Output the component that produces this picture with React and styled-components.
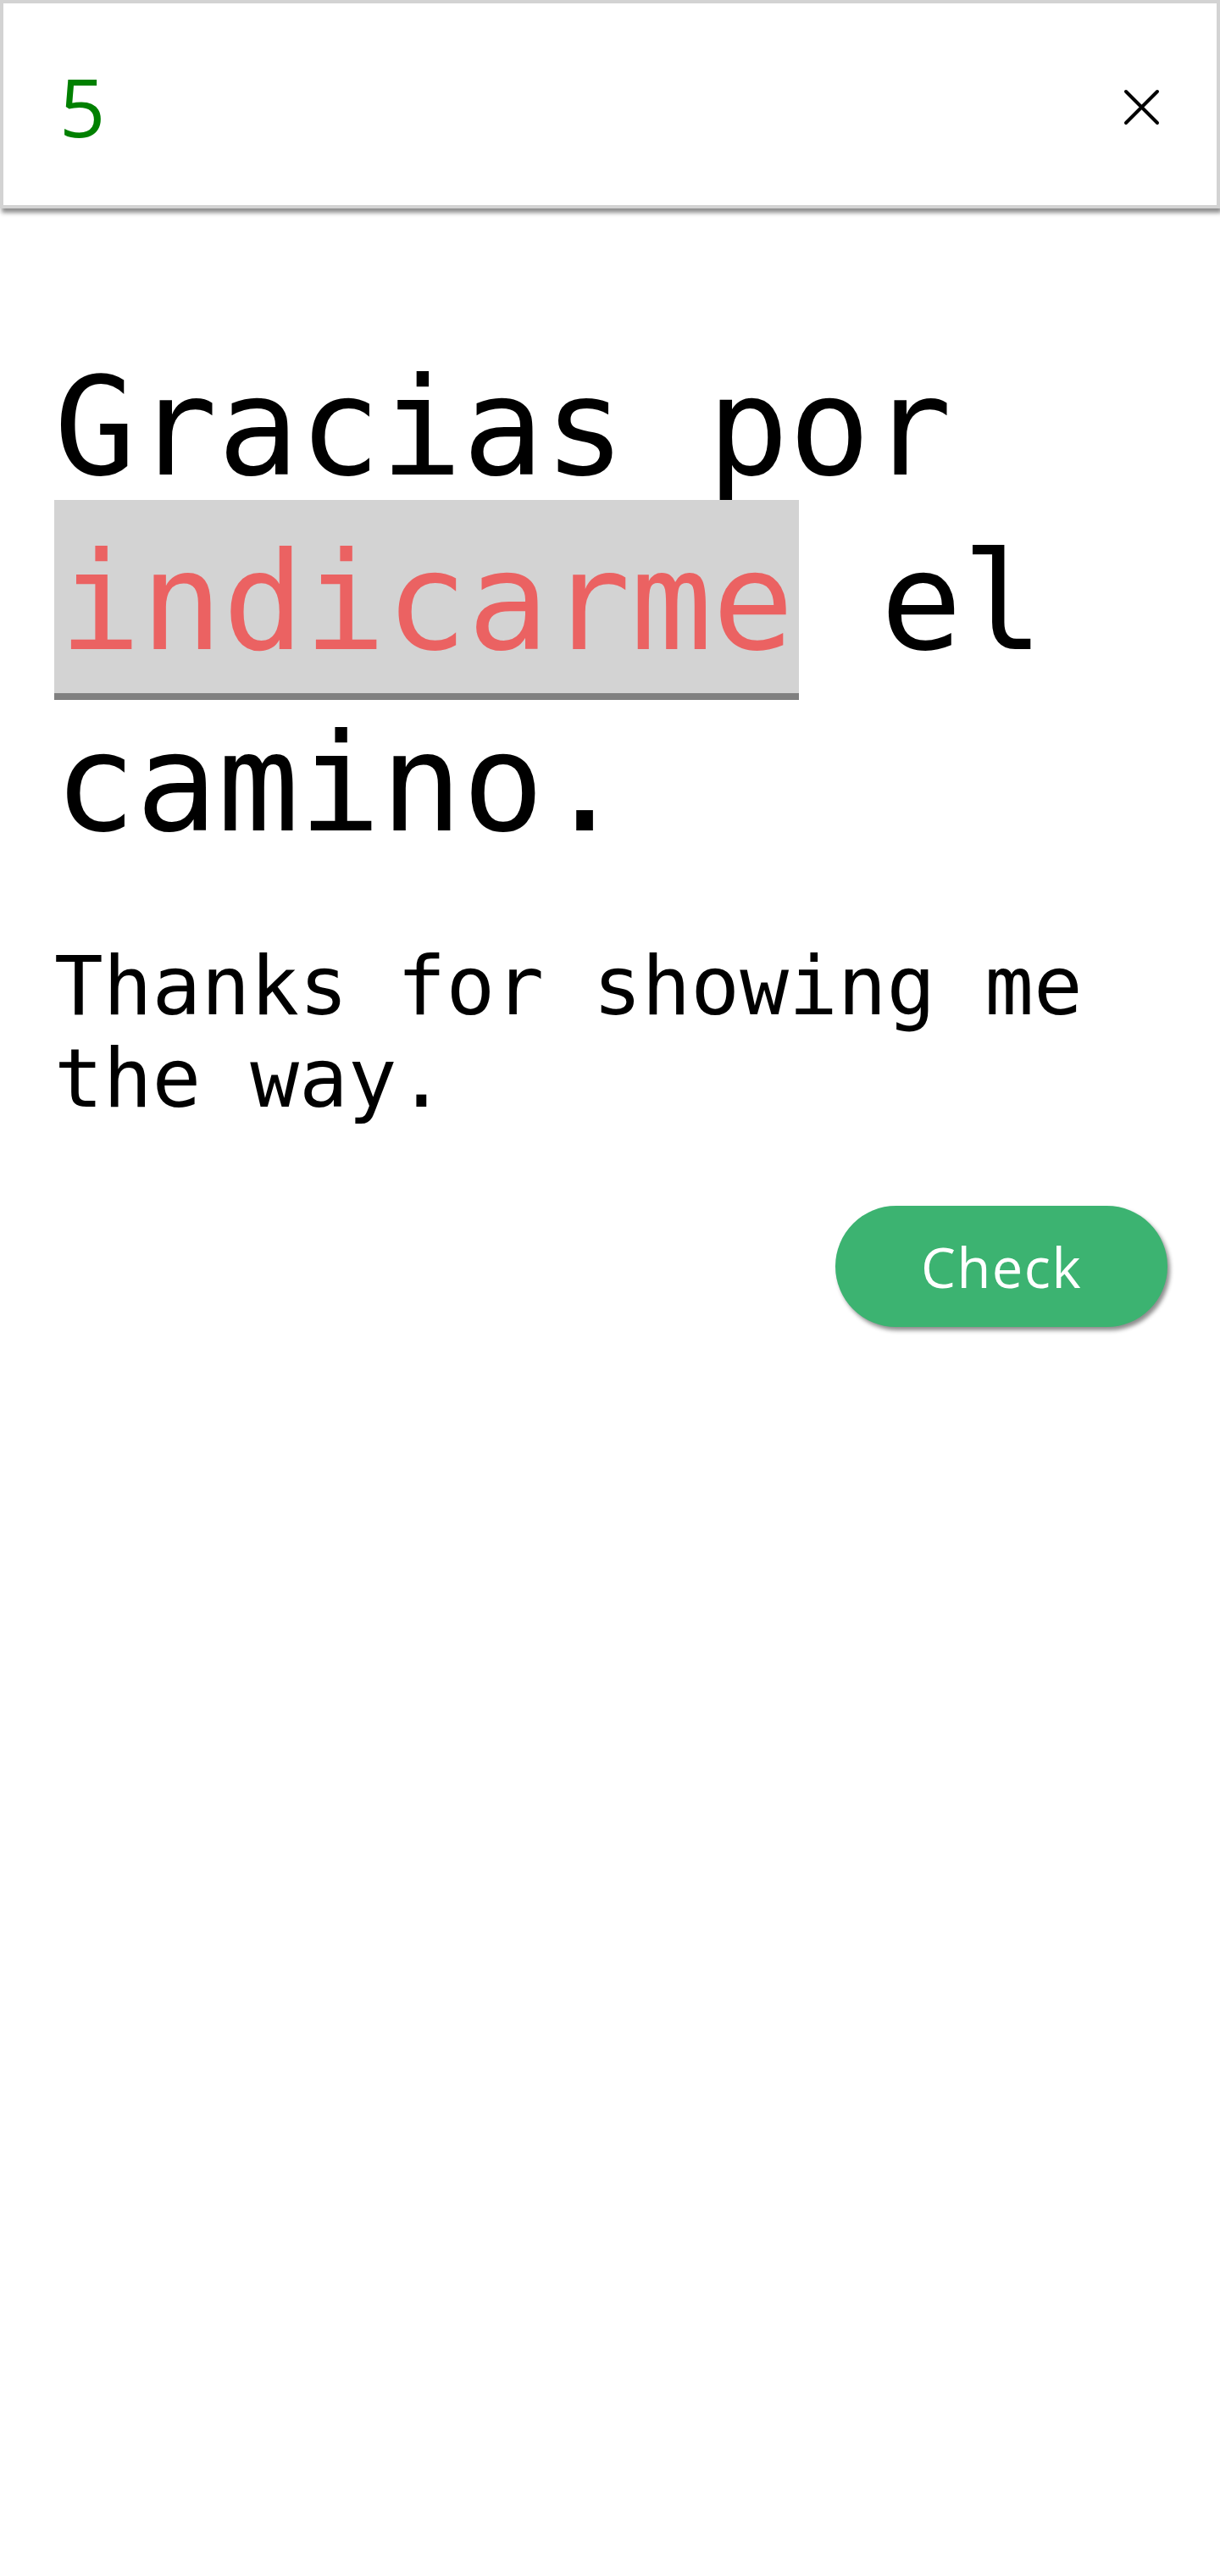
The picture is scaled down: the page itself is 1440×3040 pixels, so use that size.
import React from "react";
import styled, { createGlobalStyle } from "styled-components";

const GlobalStyle = createGlobalStyle`
  html, body {
    margin: 0;
    padding: 0;
    background: #ffffff;
  }
  body {
    width: 1440px;
    min-height: 3040px;
    font-family: "DejaVu Sans Mono", "Liberation Mono", monospace;
    color: #000000;
  }
  * { box-sizing: border-box; }
`;

const TopBar = styled.header`
  display: flex;
  align-items: center;
  justify-content: space-between;
  height: 246px;
  padding: 0 67px 0 66px;
  border: 4px solid #d3d3d3;
  box-shadow: 2px 5px 5px rgba(0, 0, 0, 0.45);
  background: #ffffff;
`;

const Counter = styled.span`
  font-family: "Open Sans", "Noto Sans", sans-serif;
  font-size: 95px;
  line-height: 1;
  color: #008000;
  margin-top: 4px;
`;

const CloseButton = styled.button`
  display: flex;
  align-items: center;
  justify-content: center;
  width: 43px;
  height: 43px;
  padding: 0;
  margin-top: 7px;
  border: none;
  background: transparent;
  cursor: pointer;
`;

const Main = styled.main`
  padding: 156px 64px 0;
`;

const Sentence = styled.h1`
  margin: 0;
  font-family: "DejaVu Sans Mono", "Liberation Mono", monospace;
  font-weight: 400;
  font-size: 160px;
  line-height: 206px;
  color: #000000;
`;

const Blank = styled.span`
  display: inline-block;
  padding: 28px 6px 14px;
  margin: -18px 0 -4px;
  line-height: 186px;
  background: #d3d3d3;
  border-bottom: 8px solid #808080;
  color: #eb6262;
`;

const Translation = styled.p`
  margin: 82px 0 0;
  font-family: "DejaVu Sans Mono", "Liberation Mono", monospace;
  font-size: 96px;
  line-height: 109px;
  color: #000000;
`;

const Actions = styled.div`
  display: flex;
  justify-content: flex-end;
  margin-top: 95px;
`;

const CheckButton = styled.button`
  display: flex;
  align-items: center;
  justify-content: center;
  width: 392px;
  height: 143px;
  margin-right: -2px;
  border: none;
  border-radius: 72px;
  background: #3cb371;
  color: #ffffff;
  font-family: "Open Sans", "Noto Sans", sans-serif;
  font-size: 65px;
  letter-spacing: 1.5px;
  box-shadow: 3px 4px 5px rgba(0, 0, 0, 0.45);
  cursor: pointer;
`;

function CloseIcon() {
  return (
    <svg width="43" height="43" viewBox="0 0 43 43" aria-hidden="true">
      <path
        d="M3 3 L40 40 M40 3 L3 40"
        stroke="#000"
        strokeWidth="4"
        strokeLinecap="round"
        fill="none"
      />
    </svg>
  );
}

export default function App() {
  return (
    <>
      <GlobalStyle />
      <TopBar>
        <Counter>5</Counter>
        <CloseButton aria-label="Close">
          <CloseIcon />
        </CloseButton>
      </TopBar>
      <Main>
        <Sentence>
          Gracias por <Blank>indicarme</Blank> el camino.
        </Sentence>
        <Translation>Thanks for showing me the way.</Translation>
        <Actions>
          <CheckButton>Check</CheckButton>
        </Actions>
      </Main>
    </>
  );
}
